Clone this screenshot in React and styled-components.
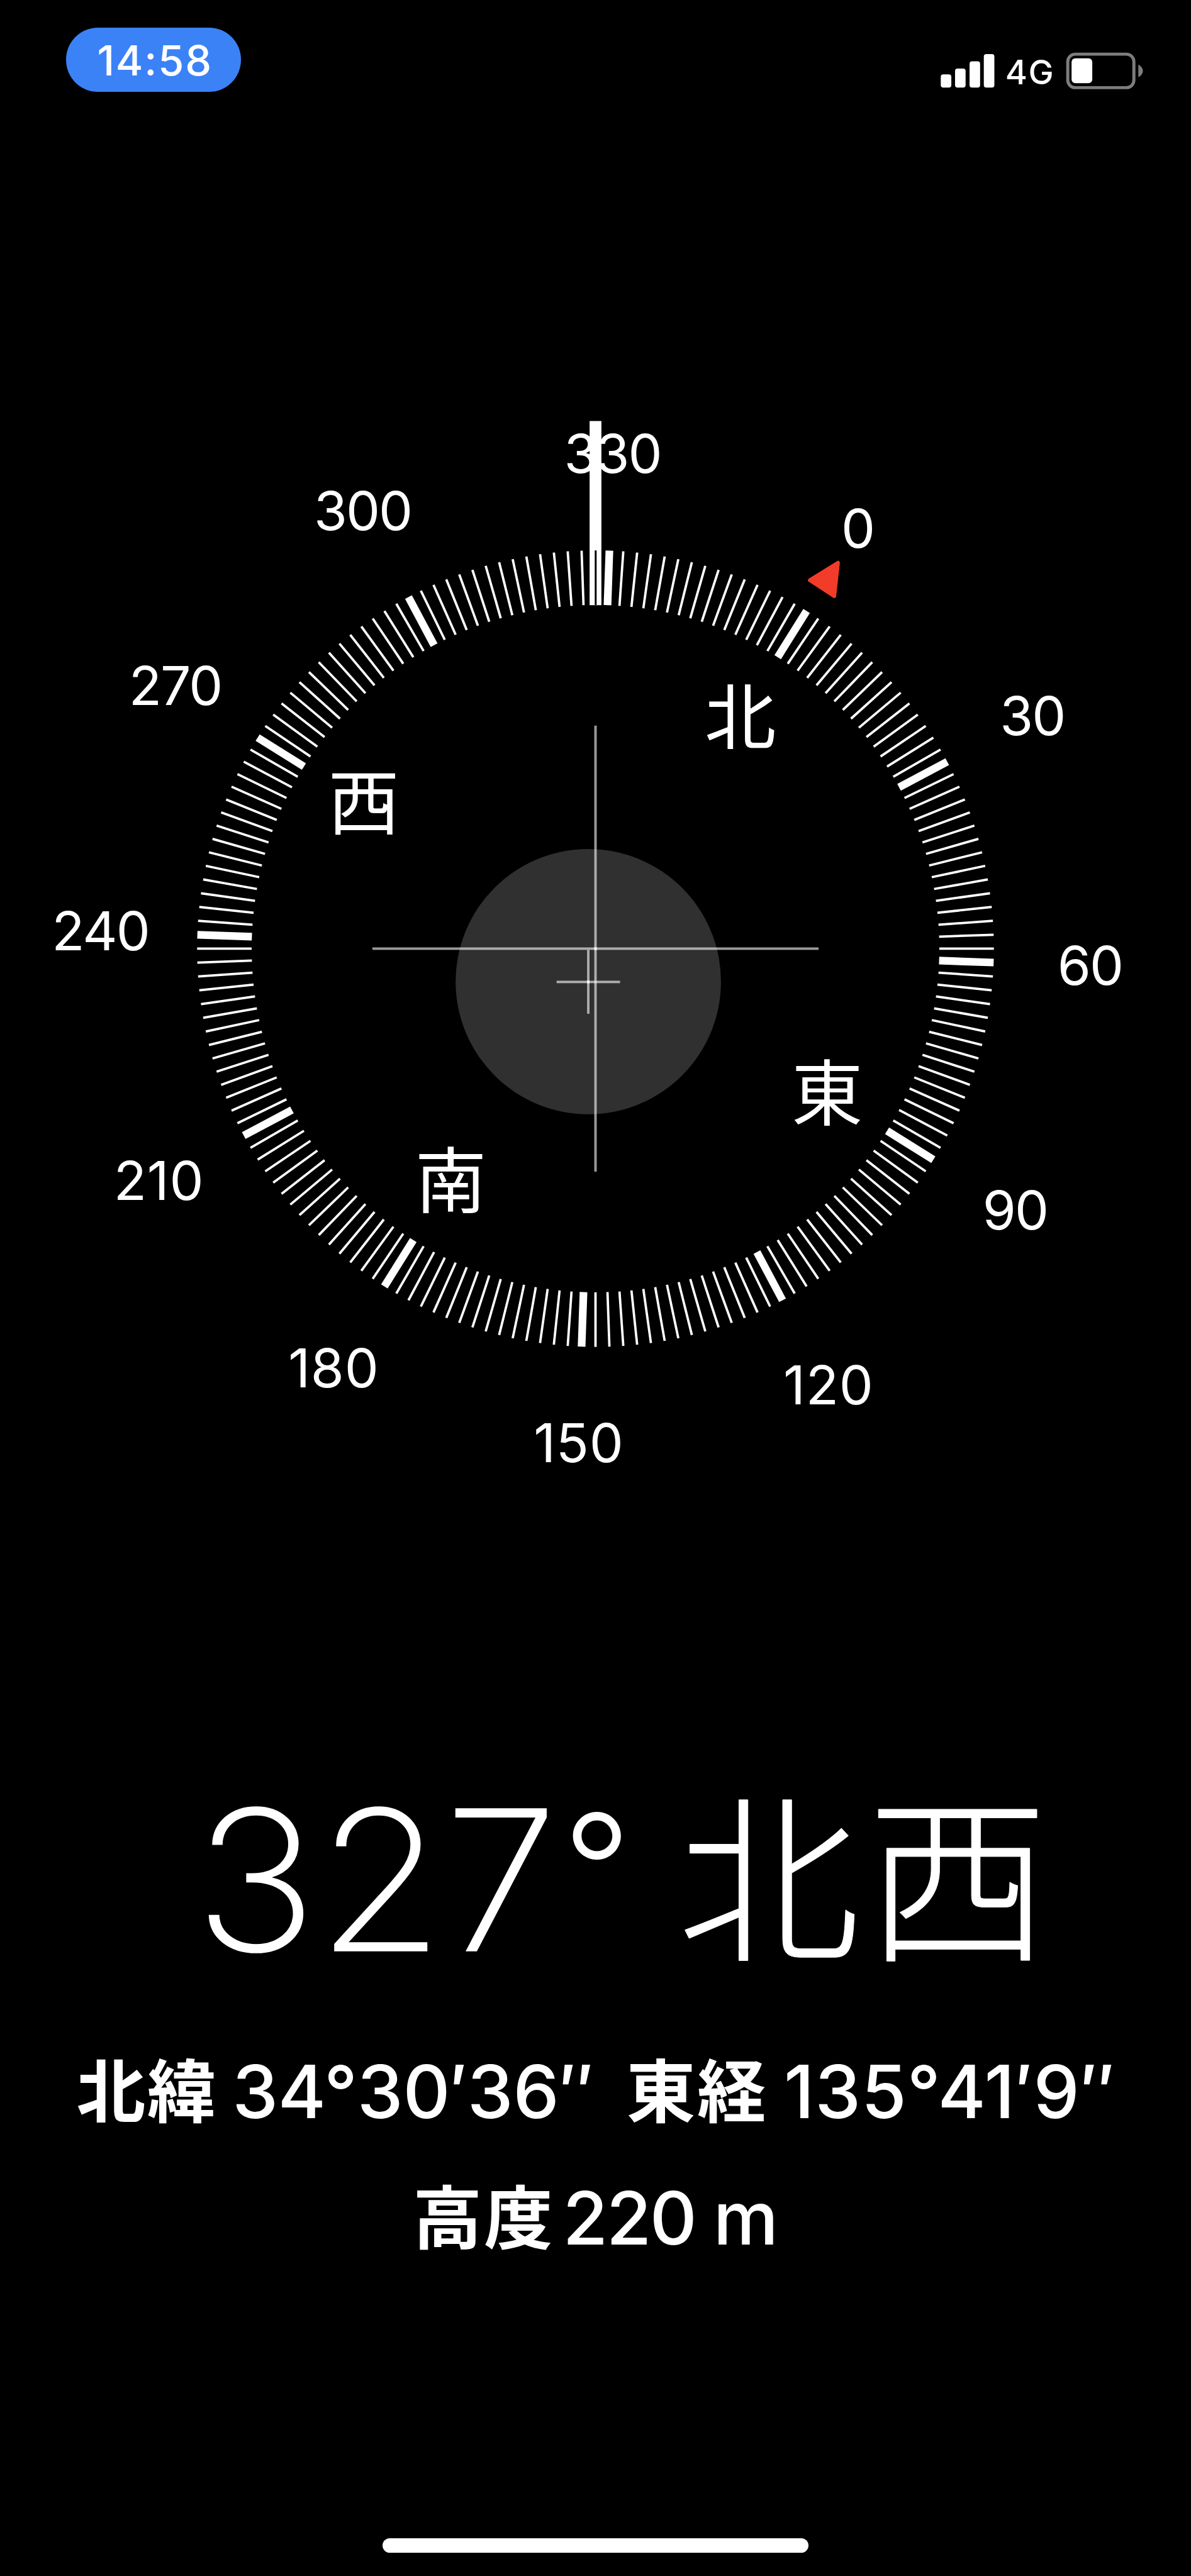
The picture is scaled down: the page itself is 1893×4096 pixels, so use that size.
import React from "react";
import styled, { createGlobalStyle } from "styled-components";

const SCALE = 0.98585;
const u = (n) => `${n * SCALE}px`;

const LATIN = 'Inter, "Liberation Sans", sans-serif';
const KANJI = '"Noto Sans CJK JP", sans-serif';

const GlobalStyle = createGlobalStyle`
  html, body { margin: 0; padding: 0; background: #000; }
`;

const Screen = styled.main`
  display: flex;
  flex-direction: column;
  width: 1893px;
  height: 4096px;
  overflow: hidden;
  background: #000;
  color: #fff;
  font-family: ${LATIN};
`;

const StatusBar = styled.header`
  box-sizing: border-box;
  flex: none;
  display: flex;
  justify-content: space-between;
  align-items: flex-start;
  height: ${u(640)};
  padding: ${u(45)} ${u(76.5)} 0 ${u(106.7)};
`;

const TimePill = styled.div`
  box-sizing: border-box;
  width: ${u(282.3)};
  height: ${u(103)};
  padding-left: ${u(50)};
  border-radius: ${u(51.5)};
  background: #3b82f7;
  font-size: ${u(67.5)};
  font-weight: 500;
  line-height: ${u(106)};
  letter-spacing: ${u(1.8)};
  white-space: nowrap;
`;

const StatusIcons = styled.div`
  display: flex;
  align-items: flex-start;
  padding-top: ${u(39)};
`;

const SignalIcon = styled.svg`
  width: ${u(88)};
  height: ${u(60)};
`;

const Network = styled.span`
  width: ${u(97)};
  margin-left: ${u(16.5)};
  font-size: ${u(54.5)};
  font-weight: 500;
  line-height: ${u(65.5)};
  letter-spacing: ${u(1.5)};
`;

const BatteryIcon = styled.svg`
  width: ${u(126)};
  height: ${u(60)};
`;

const Dial = styled.svg`
  flex: none;
  display: block;
  width: 1893px;
  height: ${u(1780)};
`;

const DegreeLabel = styled.text`
  fill: #fff;
  font-family: ${LATIN};
  font-size: 87px;
  font-weight: 400;
  letter-spacing: ${(p) => p.$tracking}px;
  text-anchor: middle;
`;

const PointLabel = styled.text`
  fill: #fff;
  font-family: ${KANJI};
  font-size: 115px;
  font-weight: 400;
  text-anchor: middle;
`;

const Readings = styled.section`
  display: flex;
  flex-direction: column;
  padding-top: ${u(420)};
`;

const Row = styled.div`
  flex: none;
  display: flex;
  align-items: flex-start;
  height: ${(p) => u(p.$height)};
  padding-left: ${(p) => u(p.$indent)};
  white-space: pre;
`;

const Heading = styled.span`
  flex: none;
  width: ${u(594)};
  font-size: ${u(315)};
  font-weight: 200;
  line-height: ${u(384)};
  -webkit-text-stroke: ${u(1.6)} #fff;
  transform: scaleX(1.055);
  transform-origin: left center;
`;

const HeadingSign = styled.span`
  flex: none;
  width: ${u(185)};
  font-size: ${u(243)};
  font-weight: 300;
  line-height: ${u(346)};
`;

const HeadingPoint = styled.span`
  font-family: ${KANJI};
  font-size: ${u(294)};
  font-weight: 300;
  line-height: ${u(348)};
  letter-spacing: ${u(11)};
  -webkit-text-stroke: ${u(1)} #fff;
`;

const Term = styled.span`
  flex: none;
  width: ${(p) => u(p.$width)};
  font-family: ${KANJI};
  font-size: ${u(111)};
  font-weight: 700;
  line-height: ${u(114)};
  letter-spacing: ${u(3)};
`;

const Value = styled.span`
  flex: none;
  width: ${(p) => (p.$width ? u(p.$width) : "auto")};
  font-size: ${u(118)};
  font-weight: 500;
  line-height: ${u(127)};
  letter-spacing: ${(p) => u(p.$tracking)};
`;

const HomeIndicator = styled.div`
  flex: none;
  align-self: center;
  width: ${u(686)};
  height: ${u(23)};
  margin-top: auto;
  margin-bottom: ${u(38)};
  border-radius: ${u(12)};
  background: #fff;
`;

const HEADING = 328;
const polar = (deg, r) => {
  const a = ((deg - HEADING) * Math.PI) / 180;
  return [Math.sin(a) * r, -Math.cos(a) * r];
};

const ticks = Array.from({ length: 180 }, (_, i) => i * 2);
const degrees = Array.from({ length: 12 }, (_, i) => i * 30);
const points = [
  { name: "北", deg: 0, rise: 0.37 },
  { name: "東", deg: 90, rise: 0.37 },
  { name: "南", deg: 180, rise: 0.37 },
  { name: "西", deg: 270, rise: 0.352 },
];

function Compass() {
  return (
    <Dial viewBox="-960 -890 1920 1780">
      <circle cx="-11.6" cy="53.2" r="213.9" fill="#303030" />
      <g fill="#fff" fillOpacity="0.6">
        <rect x="-62.7" y="51.7" width="102.3" height="4" />
        <rect x="-13.6" y="2" width="4" height="103" />
        <rect x="-359.7" y="-2" width="719.4" height="4" />
        <rect x="-2" y="-359.7" width="4" height="719.4" />
      </g>
      <rect x="-2" y="-2" width="4" height="4" fill="#fff" />
      <rect x="-13.6" y="51.7" width="4" height="4" fill="#fff" />

      {ticks.map((deg) => {
        const [x1, y1] = polar(deg, 554.3);
        const [x2, y2] = polar(deg, 642.3);
        return (
          <line
            key={deg}
            x1={x1}
            y1={y1}
            x2={x2}
            y2={y2}
            stroke="#fff"
            strokeWidth={deg % 30 === 0 ? 12.4 : 3.8}
          />
        );
      })}

      {degrees.map((deg) => {
        const [x, y] = polar(deg, 798.3);
        const tracking = String(deg).includes("1") ? 0.8 : -2;
        return (
          <DegreeLabel key={deg} $tracking={tracking} x={x + tracking / 2 + 0.5} y={y + 30.2}>
            {deg}
          </DegreeLabel>
        );
      })}

      {points.map(({ name, deg, rise }) => {
        const [x, y] = polar(deg, 440.5);
        return (
          <PointLabel key={name} x={x} y={y + rise * 115}>
            {name}
          </PointLabel>
        );
      })}

      <path
        d="M345.5 -594.3L391 -622.5L385 -568.5Z"
        fill="#f23b29"
        stroke="#f23b29"
        strokeWidth="6"
        strokeLinejoin="round"
      />

      <rect x="-9.5" y="-851" width="19" height="297" fill="#fff" />
      <rect x="-1.2" y="-642.3" width="3" height="88" fill="#000" />
    </Dial>
  );
}

export default function App() {
  return (
    <Screen>
      <GlobalStyle />
      <StatusBar>
        <TimePill>14:58</TimePill>
        <StatusIcons>
          <SignalIcon viewBox="0 0 88 60" fill="#fff">
            <rect x="0.3" y="35.7" width="17" height="21.3" rx="4" />
            <rect x="23.3" y="26.3" width="17" height="30.7" rx="4" />
            <rect x="46.7" y="14.7" width="17" height="42.3" rx="4" />
            <rect x="69.7" y="3" width="17" height="54" rx="4" />
          </SignalIcon>
          <Network>4G</Network>
          <BatteryIcon viewBox="0 0 126 60">
            <rect x="4.2" y="3.2" width="106.6" height="54" rx="12" fill="none" stroke="#7d7d7d" strokeWidth="5" />
            <rect x="10.3" y="10" width="33.4" height="40" rx="6" fill="#fff" />
            <path d="M118 20C122 22 125.300 26 125.300 30.200C125.300 34.500 122 38.500 118 40.300Z" fill="#7d7d7d" />
          </BatteryIcon>
        </StatusIcons>
      </StatusBar>

      <Compass />

      <Readings>
        <Row $height={470} $indent={313}>
          <Heading>327</Heading>
          <HeadingSign>°</HeadingSign>
          <HeadingPoint>北西</HeadingPoint>
        </Row>
        <Row $height={204} $indent={123.5}>
          <Term $width={251}>北緯</Term>
          <Value $width={635.5} $tracking={-0.3}>34°30′36″</Value>
          <Term $width={254}>東経</Term>
          <Value $tracking={0.9}>135°41′9″</Value>
        </Row>
        <Row $height={204} $indent={666}>
          <Term $width={241.4}>高度</Term>
          <Value $tracking={-2.6}>220 m</Value>
        </Row>
      </Readings>

      <HomeIndicator />
    </Screen>
  );
}
